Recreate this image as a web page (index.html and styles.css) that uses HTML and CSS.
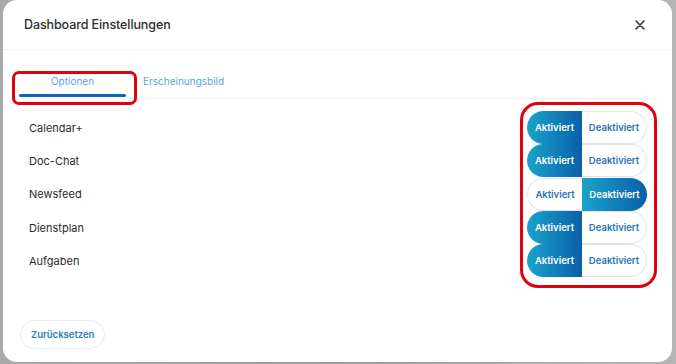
FILE: index.html
```html
<!DOCTYPE html>
<html lang="de">
<head>
<meta charset="UTF-8">
<title>Dashboard Einstellungen</title>
<meta name="viewport" content="width=device-width, initial-scale=1">
<link rel="stylesheet" href="styles.css">
</head>
<body>

<div class="modal">
  <header class="modal-head">
    <h2>Dashboard Einstellungen</h2>
    <button class="close" aria-label="Schließen">
      <svg width="10" height="10" viewBox="0 0 10 10"><path d="M1 1L9 9M9 1L1 9" stroke="#333" stroke-width="1.6" stroke-linecap="round"/></svg>
    </button>
  </header>

  <nav class="tabs">
    <a class="tab active">Optionen</a>
    <a class="tab">Erscheinungsbild</a>
  </nav>

  <ul class="modules">
    <li><span>Calendar+</span><div class="switch"><span class="seg left on">Aktiviert</span><span class="seg right">Deaktiviert</span></div></li>
    <li><span>Doc-Chat</span><div class="switch"><span class="seg left on">Aktiviert</span><span class="seg right">Deaktiviert</span></div></li>
    <li><span>Newsfeed</span><div class="switch"><span class="seg left">Aktiviert</span><span class="seg right on">Deaktiviert</span></div></li>
    <li><span>Dienstplan</span><div class="switch"><span class="seg left on">Aktiviert</span><span class="seg right">Deaktiviert</span></div></li>
    <li><span>Aufgaben</span><div class="switch"><span class="seg left on">Aktiviert</span><span class="seg right">Deaktiviert</span></div></li>
  </ul>

  <footer class="modal-foot">
    <button class="reset">Zurücksetzen</button>
  </footer>

  <span class="mark mark-tab"></span>
  <span class="mark mark-switches"></span>
</div>

</body>
</html>
```

FILE: styles.css
```css
html, body { height: 100%; }
body { margin: 0; background: linear-gradient(90deg, #a9a9a9, #9c9c9c 50%, #b4b4b4); font-family: Inter, "Noto Sans", sans-serif; overflow: hidden; }

.modal { position: relative; margin: 0 4px 0 3px; height: 362px; background: #fff; border-radius: 14px; display: flex; flex-direction: column; box-sizing: border-box; }

.modal-head { height: 50px; box-sizing: border-box; border-bottom: 1px solid #f1f2f3; display: flex; align-items: center; justify-content: space-between; padding: 0 27px 0 21px; }
.modal-head h2 { margin: 0; font-size: 12.5px; font-weight: 500; color: #2b2b2b; letter-spacing: -0.1px; }
.close { border: none; background: none; padding: 0; width: 10px; height: 10px; display: flex; cursor: pointer; }

.tabs { display: flex; align-items: flex-end; height: 49px; box-sizing: border-box; margin: 0 14px 0 16px; border-bottom: 1px solid #f0f1f2; }
.tab { position: relative; height: 30px; box-sizing: border-box; padding-top: 6px; line-height: 14px; font-size: 10px; color: #5ba2dc; cursor: pointer; }
.tab.active { width: 107px; text-align: center; }
.tab.active::after { content: ""; position: absolute; left: 0; right: 0; bottom: 1px; height: 3px; border-radius: 2px; background: #0f67b1; }
.tab + .tab { padding-left: 17px; }

.modules { list-style: none; margin: 0; padding: 12px 25px 0 26px; }
.modules li { height: 33.3px; display: flex; align-items: center; justify-content: space-between; font-size: 11px; color: #2b2b2b; }

.switch { display: flex; height: 33px; }
.seg { display: flex; align-items: center; justify-content: center; box-sizing: border-box; font-size: 9.5px; font-weight: 600; color: #2c72b9; border: 1px solid #dfe4ea; background: #fff; }
.seg.left { width: 55px; border-radius: 17px 0 0 17px; border-right: none; }
.seg.right { width: 65px; border-radius: 0 17px 17px 0; border-left: none; }
.seg.on { border: none; color: #fff; background: linear-gradient(90deg, #1aa3cb, #0a5fa9); }

.modal-foot { margin-top: auto; padding: 0 0 13px 17px; }
.reset { height: 29px; padding: 0 10px; border: 1px solid #e7e9ec; border-radius: 15px; background: #fff; font-family: inherit; font-size: 9.5px; font-weight: 600; color: #2c7bc6; cursor: pointer; }

.mark { position: absolute; border: 3px solid #e1000c; box-sizing: border-box; pointer-events: none; }
.mark-tab { left: 9px; top: 71px; width: 125px; height: 34px; border-radius: 7px; }
.mark-switches { left: 517px; top: 102px; width: 137px; height: 186px; border-radius: 18px; }
```
